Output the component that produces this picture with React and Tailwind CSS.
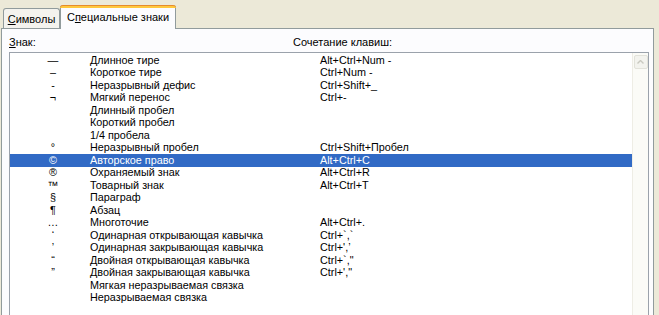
import React from 'react';

const rows = [
  { sym: '—', name: 'Длинное тире', keys: 'Alt+Ctrl+Num -' },
  { sym: '–', name: 'Короткое тире', keys: 'Ctrl+Num -' },
  { sym: '-', name: 'Неразрывный дефис', keys: 'Ctrl+Shift+_' },
  { sym: '¬', name: 'Мягкий перенос', keys: 'Ctrl+-' },
  { sym: '', name: 'Длинный пробел', keys: '' },
  { sym: '', name: 'Короткий пробел', keys: '' },
  { sym: '', name: '1/4 пробела', keys: '' },
  { sym: '°', name: 'Неразрывный пробел', keys: 'Ctrl+Shift+Пробел' },
  { sym: '©', name: 'Авторское право', keys: 'Alt+Ctrl+C', selected: true },
  { sym: '®', name: 'Охраняемый знак', keys: 'Alt+Ctrl+R' },
  { sym: '™', name: 'Товарный знак', keys: 'Alt+Ctrl+T' },
  { sym: '§', name: 'Параграф', keys: '' },
  { sym: '¶', name: 'Абзац', keys: '' },
  { sym: '…', name: 'Многоточие', keys: 'Alt+Ctrl+.' },
  { sym: '‘', name: 'Одинарная открывающая кавычка', keys: 'Ctrl+`,`' },
  { sym: '’', name: 'Одинарная закрывающая кавычка', keys: "Ctrl+',\u2019" },
  { sym: '“', name: 'Двойная открывающая кавычка', keys: 'Ctrl+`,"' },
  { sym: '”', name: 'Двойная закрывающая кавычка', keys: "Ctrl+'," + '"' },
  { sym: '', name: 'Мягкая неразрываемая связка', keys: '' },
  { sym: '', name: 'Неразрываемая связка', keys: '' },
];

const App = () => {
  return (
    <div className="w-[659px] h-[315px] overflow-hidden bg-[#ece9d8] font-['Liberation_Sans',sans-serif] text-[11px] text-black leading-none">
      {/* Tabs */}
      <div className="flex items-end h-[28px] pl-[3px]">
        <div className="h-[20px] w-[57px] border border-b-0 border-[#919b9c] rounded-t-[3px] bg-[#f4f3ee] flex items-center justify-center pt-[1px]">
          <span><u>С</u>имволы</span>
        </div>
        <div className="relative z-10 -mb-[1px] h-[24px] w-[116px] border border-b-0 border-[#919b9c] border-t-0 rounded-t-[3px] bg-[#fcfcfe] flex flex-col">
          <div className="h-[3px] rounded-t-[3px] bg-[#ffc83c] border-t border-[#e68b2c] -mx-[1px]" />
          <div className="flex-1 flex items-center justify-center pb-[2px]">
            <span>С<u>п</u>ециальные знаки</span>
          </div>
        </div>
      </div>

      {/* Panel */}
      <div className="ml-[1px] w-[653px] h-[300px] border border-[#919b9c] bg-[#fcfcfe] px-[7px]">
        <div className="flex h-[23px] items-end pb-[4px]">
          <span className="w-[284px]"><u>З</u>нак:</span>
          <span>Сочетание клавиш:</span>
        </div>
        <div className="flex w-[640px] h-[280px] border border-[#9ba2ab] bg-white">
          <div className="flex-1 pt-[1px] text-[10.8px]">
            {rows.map((r, i) => (
              <div
                key={i}
                className={`flex items-center h-[12.5px] ${r.selected ? 'bg-[#316ac5] text-white' : ''}`}
              >
                <span className="w-[80px] pl-[6px] text-center">{r.sym}</span>
                <span className="w-[230px]">{r.name}</span>
                <span>{r.keys}</span>
              </div>
            ))}
          </div>
          {/* Scrollbar */}
          <div className="w-[16px] bg-[#fbfbf7] border-l border-[#eeede5] pt-[2px] flex flex-col items-center">
            <div className="w-[14px] h-[14px] rounded-[2px] border border-[#e2e2da] bg-[#f3f3ee] flex items-center justify-center">
              <svg width="7" height="4" viewBox="0 0 7 4">
                <path d="M0.5 3.5 L3.5 0.5 L6.5 3.5" fill="none" stroke="#c9c9c0" strokeWidth="1.4" />
              </svg>
            </div>
          </div>
        </div>
      </div>
    </div>
  );
};

export default App;
